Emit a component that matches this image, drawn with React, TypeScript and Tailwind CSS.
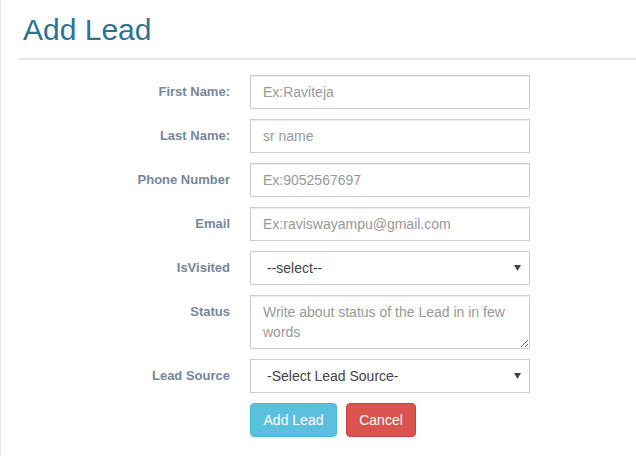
import React from 'react';

const fields = [
  { label: 'First Name:', placeholder: 'Ex:Raviteja' },
  { label: 'Last Name:', placeholder: 'sr name' },
  { label: 'Phone Number', placeholder: 'Ex:9052567697' },
  { label: 'Email', placeholder: 'Ex:raviswayampu@gmail.com' },
];

const inputCls =
  'w-[280px] h-[34px] border border-[#ccc] rounded-none bg-white px-[12px] text-[14px] text-[#555] placeholder:text-[#999] outline-none shadow-[inset_0_1px_1px_rgba(0,0,0,0.075)]';

function Label({ children }: { children: React.ReactNode }) {
  return (
    <label className="w-[249px] shrink-0 pr-[20px] pt-[7px] text-right text-[13px] leading-[20px] font-bold text-[#78869a]">
      {children}
    </label>
  );
}

function Select({ value }: { value: string }) {
  return (
    <div className="relative w-[280px]">
      <select
        defaultValue={value}
        className="w-[280px] h-[34px] appearance-none border border-[#ccc] rounded-none bg-white pl-[16px] pr-[24px] text-[14px] text-[#444] outline-none"
      >
        <option>{value}</option>
      </select>
      {/* arrow */}
      <svg className="absolute right-[9px] top-[14px] pointer-events-none" width="7" height="6" viewBox="0 0 7 6">
        <path d="M0 0 H7 L3.5 6 Z" fill="#444" />
      </svg>
    </div>
  );
}

export default function App() {
  return (
    <div className="min-h-[456px] border-l border-[#e7e7e7] bg-white font-['Liberation_Sans',Arial,sans-serif]">
      <div className="pl-[22px] pt-[13px]">
        <h2 className="text-[30px] leading-[33px] font-normal text-[#31708f]">Add Lead</h2>
      </div>
      <div className="ml-[17px] mt-[12px] h-[2px] bg-[#e7e8ec]" />

      <form className="mt-[15px] flex flex-col gap-[10px]" onSubmit={(e) => e.preventDefault()}>
        {fields.map((f) => (
          <div key={f.label} className="flex items-start">
            <Label>{f.label}</Label>
            <input className={inputCls} placeholder={f.placeholder} />
          </div>
        ))}

        <div className="flex items-start">
          <Label>IsVisited</Label>
          <Select value="--select--" />
        </div>

        <div className="flex items-start">
          <Label>Status</Label>
          <textarea
            rows={2}
            placeholder="Write about status of the Lead in in few words"
            className="w-[280px] h-[54px] border border-[#ccc] rounded-none bg-white px-[12px] py-[6px] text-[14px] leading-[20px] text-[#555] placeholder:text-[#999] outline-none shadow-[inset_0_1px_1px_rgba(0,0,0,0.075)]"
          />
        </div>

        <div className="flex items-start">
          <Label>Lead Source</Label>
          <Select value="-Select Lead Source-" />
        </div>

        <div className="flex pl-[249px] gap-[9px]">
          <button className="h-[34px] w-[87px] rounded-[4px] border border-[#46b8da] bg-[#5bc0de] text-[14px] text-white">
            Add Lead
          </button>
          <button className="h-[34px] w-[70px] rounded-[4px] border border-[#d43f3a] bg-[#d9534f] text-[14px] text-white">
            Cancel
          </button>
        </div>
      </form>
    </div>
  );
}
